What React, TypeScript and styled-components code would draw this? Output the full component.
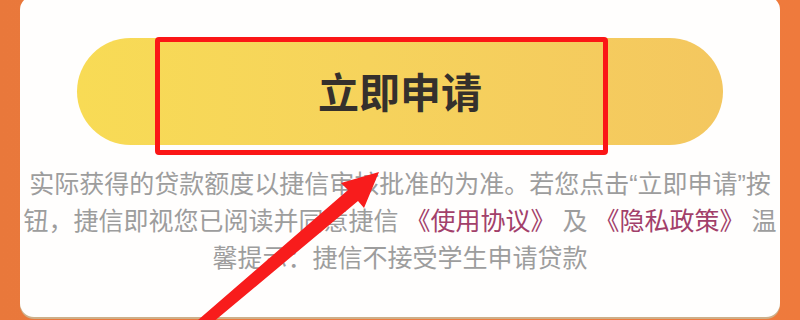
import React from "react";
import styled, { createGlobalStyle } from "styled-components";

const GlobalStyle = createGlobalStyle`
  html, body { margin: 0; padding: 0; }
  body {
    width: 800px;
    height: 320px;
    overflow: hidden;
    font-family: "Liberation Sans", "Noto Sans CJK SC", sans-serif;
  }
`;

const Page = styled.div`
  position: relative;
  width: 800px;
  height: 320px;
  box-sizing: border-box;
  padding: 0 20px;
  background: linear-gradient(90deg, #e9783b 0%, #ee7b3f 50%, #ef7a3c 100%);
  overflow: hidden;
`;

const Card = styled.div`
  margin-top: -4px;
  height: 321px;
  box-sizing: border-box;
  background: #fffefd;
  border-radius: 14px;
  box-shadow: 0 2px 0 #cdb08a;
  padding-top: 42px;
  display: flex;
  flex-direction: column;
  align-items: stretch;
`;

const ApplyButton = styled.button`
  margin: 0 57px;
  height: 107px;
  border: none;
  border-radius: 54px;
  background: linear-gradient(90deg, #f8db55 0%, #f6d35c 45%, #f4c75f 100%);
  color: #35302c;
  font-family: "Noto Sans CJK SC", sans-serif;
  font-size: 41px;
  font-weight: 600;
  letter-spacing: 0px;
  padding: 0 0 4px 0;
  cursor: pointer;
`;

const Notice = styled.p`
  margin: 21px 0 0 0;
  text-align: center;
  font-size: 25px;
  line-height: 37px;
  color: #9d9d9d;
  white-space: nowrap;
`;

const Link = styled.span`
  color: #a2406a;
`;

const Highlight = styled.div`
  position: absolute;
  left: 155px;
  top: 37px;
  width: 453px;
  height: 118px;
  box-sizing: border-box;
  border: 5px solid #fb1616;
  border-radius: 4px;
  pointer-events: none;
`;

const ArrowLayer = styled.svg`
  position: absolute;
  left: 0;
  top: 0;
  width: 800px;
  height: 320px;
  pointer-events: none;
`;

export default function App() {
  return (
    <>
      <GlobalStyle />
      <Page>
        <Card>
          <ApplyButton type="button">立即申请</ApplyButton>
          <Notice>
            实际获得的贷款额度以捷信审核批准的为准。若您点击“立即申请”按
            <br />
            钮，捷信即视您已阅读并同意捷信 <Link>《使用协议》</Link> 及{" "}
            <Link>《隐私政策》</Link> 温
            <br />
            馨提示：捷信不接受学生申请贷款
          </Notice>
        </Card>
        <Highlight />
        <ArrowLayer viewBox="0 0 800 320">
          <polygon
            points="379,172 364,208 358,201 206,328 198,320 348,190 341,183"
            fill="#f81c1c"
          />
        </ArrowLayer>
      </Page>
    </>
  );
}
